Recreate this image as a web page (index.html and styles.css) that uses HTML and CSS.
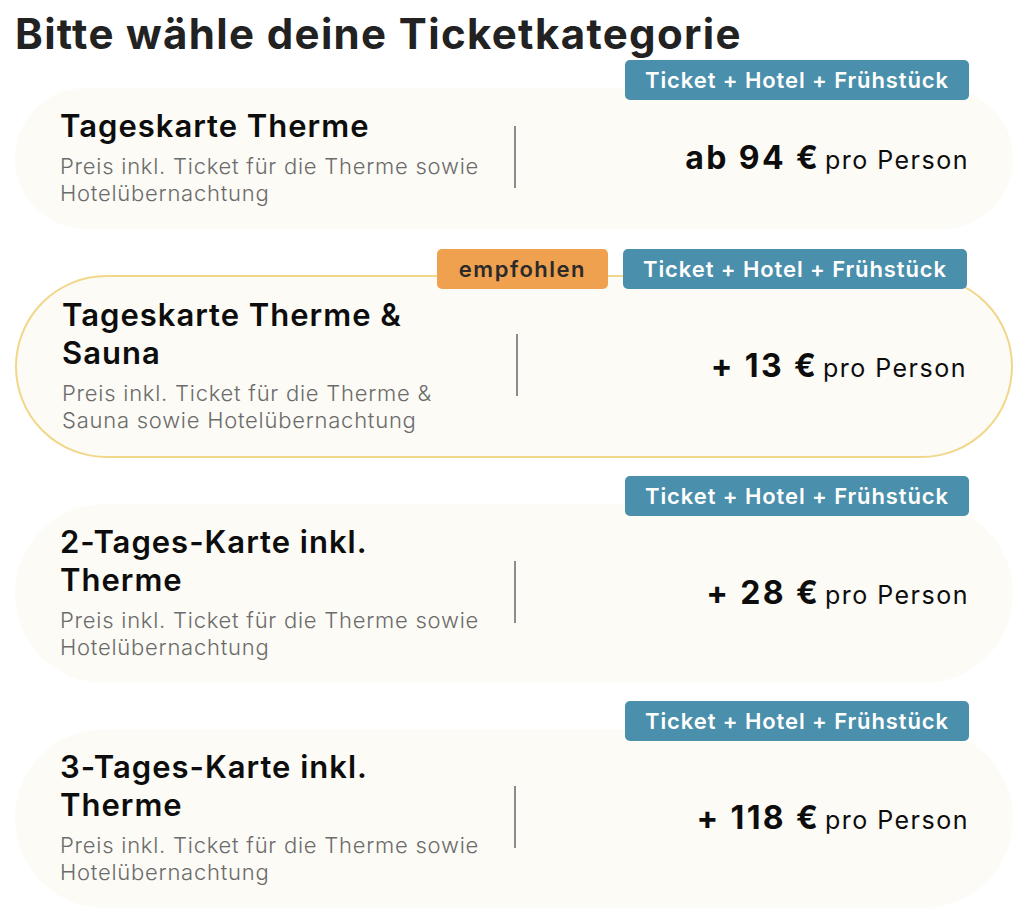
FILE: index.html
```html
<!DOCTYPE html>
<html lang="de">
<head>
<meta charset="utf-8">
<title>Ticketkategorie</title>
<link rel="stylesheet" href="styles.css">
</head>
<body>
<main class="page">
  <h1 class="heading">Bitte wähle deine Ticketkategorie</h1>
  <div class="list">
    <div class="card">
      <div class="tags"><span class="tag tag-blue">Ticket + Hotel + Frühstück</span></div>
      <div class="info">
        <h2 class="name">Tageskarte Therme</h2>
        <p class="desc">Preis inkl. Ticket für die Therme sowie<br>Hotelübernachtung</p>
      </div>
      <div class="divider"></div>
      <div class="price"><strong class="amount">ab 94 €</strong> <span class="unit">pro Person</span></div>
    </div>
    <div class="card card-rec">
      <div class="tags"><span class="tag tag-rec">empfohlen</span><span class="tag tag-blue">Ticket + Hotel + Frühstück</span></div>
      <div class="info">
        <h2 class="name">Tageskarte Therme &amp;<br>Sauna</h2>
        <p class="desc">Preis inkl. Ticket für die Therme &amp;<br>Sauna sowie Hotelübernachtung</p>
      </div>
      <div class="divider"></div>
      <div class="price"><strong class="amount">+ 13 €</strong> <span class="unit">pro Person</span></div>
    </div>
    <div class="card">
      <div class="tags"><span class="tag tag-blue">Ticket + Hotel + Frühstück</span></div>
      <div class="info">
        <h2 class="name">2-Tages-Karte inkl.<br>Therme</h2>
        <p class="desc">Preis inkl. Ticket für die Therme sowie<br>Hotelübernachtung</p>
      </div>
      <div class="divider"></div>
      <div class="price"><strong class="amount">+ 28 €</strong> <span class="unit">pro Person</span></div>
    </div>
    <div class="card">
      <div class="tags"><span class="tag tag-blue">Ticket + Hotel + Frühstück</span></div>
      <div class="info">
        <h2 class="name">3-Tages-Karte inkl.<br>Therme</h2>
        <p class="desc">Preis inkl. Ticket für die Therme sowie<br>Hotelübernachtung</p>
      </div>
      <div class="divider"></div>
      <div class="price"><strong class="amount">+ 118 €</strong> <span class="unit">pro Person</span></div>
    </div>
  </div>
</main>
</body>
</html>
```
FILE: styles.css
```css
* { box-sizing: border-box; }
html, body { margin: 0; padding: 0; background: #ffffff; }
body { font-family: Inter, "Open Sans", "DejaVu Sans", sans-serif; color: #111; }
.page { padding: 0 11px 0 15px; }
.heading {
  margin: 10px 0 0 0;
  font-size: 42px;
  line-height: 48px;
  font-weight: 700;
  letter-spacing: 1.35px;
  color: #222;
}
.list {
  display: flex;
  flex-direction: column;
  gap: 46px;
  margin-top: 30px;
}
.card {
  position: relative;
  display: flex;
  align-items: center;
  padding: 19px 44px 22px 45px;
  background: #fcfbf6;
  border-radius: 999px;
}
.card-rec { border: 2px solid #f1d78a; }
.tags {
  position: absolute;
  top: -28px;
  right: 44px;
  display: flex;
  gap: 15px;
}
.tag {
  display: block;
  height: 40px;
  line-height: 40px;
  padding: 0 20px;
  border-radius: 5px;
  font-size: 22px;
  font-weight: 600;
  letter-spacing: 0.9px;
  white-space: nowrap;
}
.tag-blue { background: #4a8fab; color: #fff; }
.tag-rec { background: #f0a14f; color: #2a2a2a; padding: 0 22px; letter-spacing: 1.5px; }
.info { flex: 0 0 435px; }
.name {
  margin: 0;
  font-size: 31px;
  line-height: 38px;
  font-weight: 600;
  letter-spacing: 1px;
  color: #0d0d0d;
}
.desc {
  margin: 8px 0 0 0;
  font-size: 22px;
  line-height: 27px;
  font-weight: 300;
  letter-spacing: 0.75px;
  color: #6b6b6b;
}
.divider {
  width: 2px;
  height: 62px;
  margin-left: 19px;
  background: #8c8c8c;
}
.price { margin-left: auto; white-space: nowrap; color: #0d0d0d; }
.amount { font-size: 32px; font-weight: 700; letter-spacing: 2.4px; }
.unit { font-size: 25px; font-weight: 400; letter-spacing: 1.5px; }
```
